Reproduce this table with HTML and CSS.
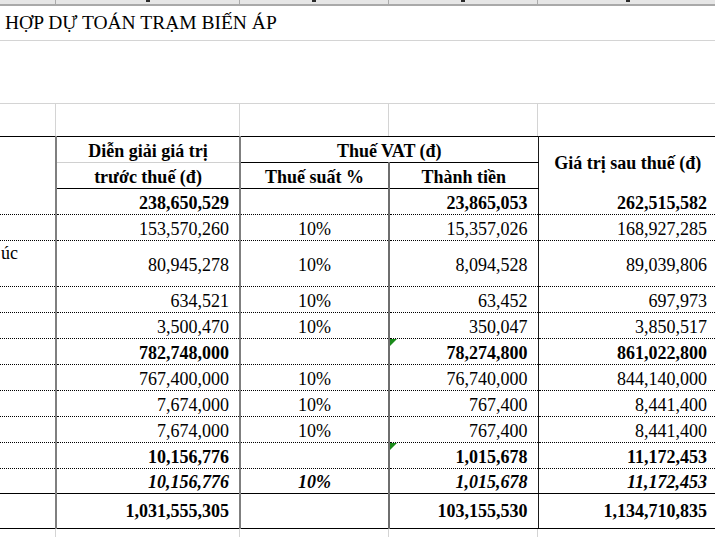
FILE: index.html
```html
<!DOCTYPE html>
<html lang="vi">
<head>
<meta charset="utf-8">
<title>Tổng hợp dự toán trạm biến áp</title>
<link rel="stylesheet" href="styles.css">
</head>
<body>
<div class="sheet">
  <div class="colheads">
    <div></div>
    <div><i></i></div>
    <div><i></i></div>
    <div><i></i></div>
    <div><i></i></div>
  </div>
  <div class="title">HỢP DỰ TOÁN TRẠM BIẾN ÁP</div>
  <div class="blank"></div>
  <div class="gridrow"><div></div><div></div><div></div><div></div><div></div></div>
  <table class="dt">
    <colgroup>
      <col class="wA"><col class="wB"><col class="wC"><col class="wD"><col class="wE">
    </colgroup>
    <tr class="hd1">
      <td class="cA" rowspan="2"></td>
      <td class="cB h b-soft">Diễn giải giá trị</td>
      <td class="cCD h b-hard" colspan="2">Thuế VAT (đ)</td>
      <td class="cE h mid" rowspan="2">Giá trị sau thuế (đ)</td>
    </tr>
    <tr class="hd2">
      <td class="cB h">trước thuế (đ)</td>
      <td class="cC h">Thuế suất %</td>
      <td class="cD h">Thành tiền</td>
    </tr>
    <tr class="row dot bold">
      <td class="cA"></td><td class="cB num">238,650,529</td><td class="cC"></td><td class="cD num">23,865,053</td><td class="cE num">262,515,582</td>
    </tr>
    <tr class="row dot">
      <td class="cA"></td><td class="cB num">153,570,260</td><td class="cC pct">10%</td><td class="cD num">15,357,026</td><td class="cE num">168,927,285</td>
    </tr>
    <tr class="row tall dot">
      <td class="cA lbl">úc</td><td class="cB num">80,945,278</td><td class="cC pct">10%</td><td class="cD num">8,094,528</td><td class="cE num">89,039,806</td>
    </tr>
    <tr class="row dot">
      <td class="cA"></td><td class="cB num">634,521</td><td class="cC pct">10%</td><td class="cD num">63,452</td><td class="cE num">697,973</td>
    </tr>
    <tr class="row dot">
      <td class="cA"></td><td class="cB num">3,500,470</td><td class="cC pct">10%</td><td class="cD num">350,047</td><td class="cE num">3,850,517</td>
    </tr>
    <tr class="row dot bold">
      <td class="cA"></td><td class="cB num">782,748,000</td><td class="cC"></td><td class="cD num flagged"><span class="flag"></span>78,274,800</td><td class="cE num">861,022,800</td>
    </tr>
    <tr class="row dot">
      <td class="cA"></td><td class="cB num">767,400,000</td><td class="cC pct">10%</td><td class="cD num">76,740,000</td><td class="cE num">844,140,000</td>
    </tr>
    <tr class="row dot">
      <td class="cA"></td><td class="cB num">7,674,000</td><td class="cC pct">10%</td><td class="cD num">767,400</td><td class="cE num">8,441,400</td>
    </tr>
    <tr class="row dot">
      <td class="cA"></td><td class="cB num">7,674,000</td><td class="cC pct">10%</td><td class="cD num">767,400</td><td class="cE num">8,441,400</td>
    </tr>
    <tr class="row dot bold">
      <td class="cA"></td><td class="cB num">10,156,776</td><td class="cC"></td><td class="cD num flagged"><span class="flag"></span>1,015,678</td><td class="cE num">11,172,453</td>
    </tr>
    <tr class="row short solid bold ital">
      <td class="cA"></td><td class="cB num">10,156,776</td><td class="cC pct">10%</td><td class="cD num">1,015,678</td><td class="cE num">11,172,453</td>
    </tr>
    <tr class="row total solid bold">
      <td class="cA"></td><td class="cB num">1,031,555,305</td><td class="cC"></td><td class="cD num">103,155,530</td><td class="cE num">1,134,710,835</td>
    </tr>
  </table>
  <div class="gridrow tail"><div></div><div></div><div></div><div></div><div></div></div>
</div>
</body>
</html>
```
FILE: styles.css
```css
html, body {
  margin: 0;
  padding: 0;
}
body {
  width: 715px;
  height: 537px;
  overflow: hidden;
  background: #fff;
  color: #000;
  font-family: "Liberation Serif", "Times New Roman", serif;
}
.sheet {
  width: 717px;
}
.colheads {
  display: grid;
  grid-template-columns: 56px 184px 149px 149px 179px;
  height: 4px;
  background: #e6e6e6;
  border-bottom: 2px solid #a9a9a9;
}
.colheads div {
  box-sizing: border-box;
  border-right: 1px solid #ababab;
  display: flex;
  justify-content: center;
  align-items: flex-start;
}
.colheads div:last-child {
  border-right: none;
}
.colheads i {
  display: block;
  width: 4px;
  height: 2px;
  background: #2a2a2a;
}
.title {
  height: 34px;
  line-height: 34px;
  font-size: 19.5px;
  padding-left: 5px;
  border-bottom: 1px solid #d4d4d4;
  white-space: nowrap;
}
.blank {
  height: 62px;
  border-bottom: 1px solid #d4d4d4;
}
.gridrow {
  display: grid;
  grid-template-columns: 56px 184px 149px 149px 179px;
  height: 32px;
}
.gridrow div {
  box-sizing: border-box;
  border-right: 1px solid #d4d4d4;
}
.gridrow.tail {
  height: 10px;
}
.dt {
  border-collapse: collapse;
  table-layout: fixed;
  width: 717px;
  font-size: 18px;
}
.wA { width: 56px; }
.wB { width: 184px; }
.wC { width: 149px; }
.wD { width: 149px; }
.wE { width: 179px; }
.dt td {
  padding: 0 10px 1px;
  line-height: 20px;
  vertical-align: bottom;
  white-space: nowrap;
  overflow: hidden;
}
.dt .cA {
  border-right: 2px solid #7f7f7f;
}
.dt .cB {
  border-right: 2px solid #7f7f7f;
}
.dt .cC {
  border-right: 2px solid #6e6e6e;
}
.dt .cCD {
  border-right: 1px solid #1a1a1a;
}
.dt .cD {
  border-right: 1px solid #1a1a1a;
}
.hd1 td {
  border-top: 1px solid #000;
  height: 24px;
}
.hd2 td {
  height: 24px;
  border-bottom: 1px solid #000;
}
.h {
  font-weight: bold;
  text-align: center;
  padding-bottom: 2px;
}
.h.mid {
  vertical-align: middle;
  padding-bottom: 0;
}
.b-soft {
  border-bottom: 1px solid #d0d0d0;
}
.b-hard {
  border-bottom: 1px solid #000;
}
.row td {
  height: 24px;
}
.row.dot td {
  border-bottom: 1px dotted #000;
}
.row.solid td {
  border-bottom: 1px solid #000;
}
.row.tall td {
  height: 43px;
  vertical-align: middle;
  padding-top: 2px;
  padding-bottom: 0;
}
.row.tall td.lbl {
  vertical-align: top;
  padding: 2px 0 0 1px;
  text-align: left;
}
.row.short td {
  height: 23px;
}
.row.total td {
  height: 34px;
  vertical-align: middle;
  padding-bottom: 0;
}
.bold td {
  font-weight: bold;
}
.ital td {
  font-style: italic;
}
.num {
  text-align: right;
}
.pct {
  text-align: center;
}
.flagged {
  position: relative;
}
.flag {
  position: absolute;
  top: 0;
  left: 0;
  width: 0;
  height: 0;
  border-top: 7px solid #1a8a1a;
  border-right: 7px solid transparent;
}
```
